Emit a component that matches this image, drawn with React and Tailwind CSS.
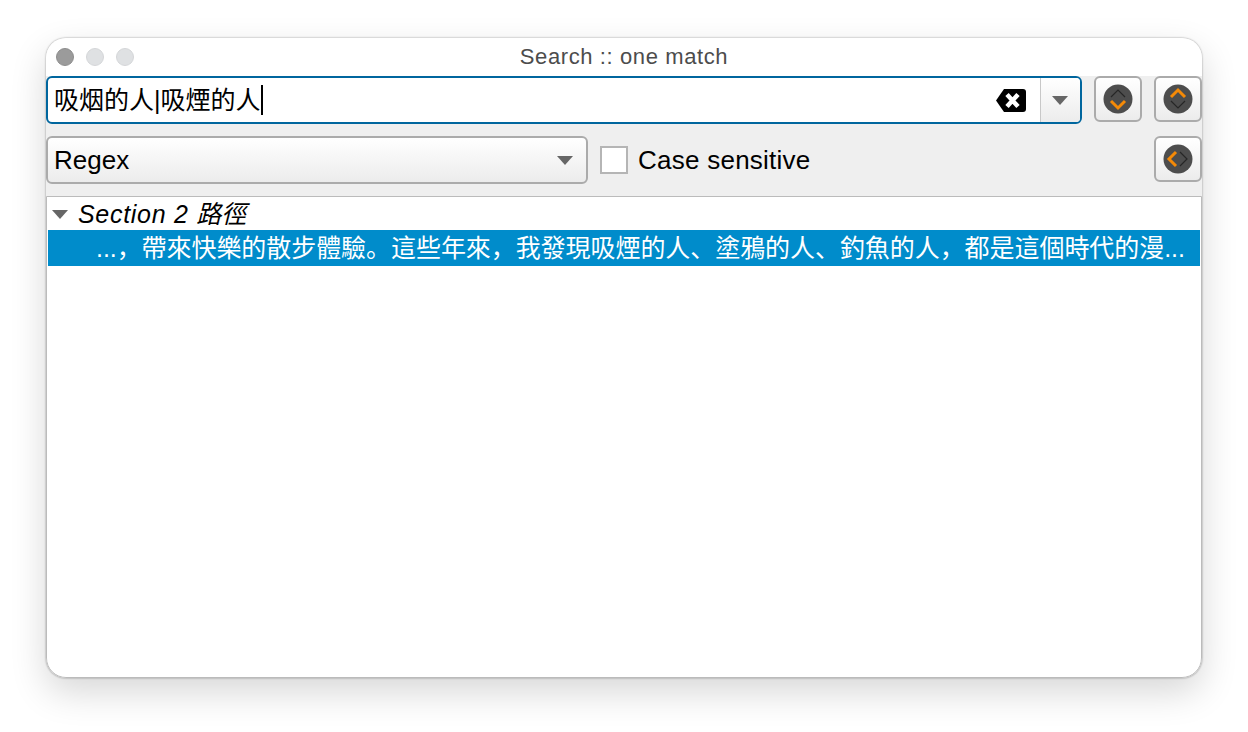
import React from 'react';

const Caret = ({ className = '' }) => (
  <svg width="16" height="9" viewBox="0 0 16 9" className={className}>
    <path d="M0 0h16L8 9z" fill="#666" />
  </svg>
);

// round dark button icon, the "dir" arrow is the orange one
const NavIcon = ({ dir }) => {
  const paths = {
    down: ['M7 12l7-7 7 7', 'M7 16l7 7 7-7'],
    up: ['M7 16l7 7 7-7', 'M7 12l7-7 7 7'],
    left: ['M16 7l7 7-7 7', 'M12 7l-7 7 7 7'],
  };
  const [dim, hot] = paths[dir];
  return (
    <svg width="30" height="30" viewBox="-1 -1 30 30">
      <circle cx="14" cy="14" r="14.500" fill="#4d4d4d" />
      <path d={dim} fill="none" stroke="#262626" strokeWidth="1.200" />
      <path d={hot} fill="none" stroke="#f58a07" strokeWidth="3" />
    </svg>
  );
};

const NavButton = ({ dir }) => (
  <button className="w-[48px] h-[46px] flex items-center justify-center rounded-[6px] border-2 border-[#ababab] bg-gradient-to-b from-white to-[#ececec]">
    <NavIcon dir={dir} />
  </button>
);

const App = () => {
  return (
    <div className="w-[1248px] h-[732px] bg-white pl-[46px] pt-[38px] overflow-hidden font-['Liberation_Sans','Noto_Sans_CJK_SC',sans-serif]">
      <div className="w-[1156px] h-[640px] flex flex-col rounded-[20px] overflow-hidden bg-[#efefef] shadow-[0_0_2px_rgba(0,0,0,0.45),0_14px_36px_rgba(0,0,0,0.16)]">
        {/* title bar */}
        <div className="h-[38px] shrink-0 bg-white flex items-center relative">
          <div className="flex items-center gap-[12px] pl-[10px]">
            <span className="w-[18px] h-[18px] rounded-full bg-[#9b9b9b] border border-[#8d8d8d]" />
            <span className="w-[18px] h-[18px] rounded-full bg-[#dfe1e3] border border-[#d4d6d8]" />
            <span className="w-[18px] h-[18px] rounded-full bg-[#dfe1e3] border border-[#d4d6d8]" />
          </div>
          <span className="absolute inset-x-0 top-[2px] text-center text-[22px] tracking-[0.6px] text-[#4c4c4c]">Search :: one match</span>
        </div>

        {/* search row */}
        <div className="flex items-start shrink-0">
          <div className="w-[1036px] h-[48px] flex rounded-[6px] border-2 border-[#00669e] bg-white overflow-hidden">
            <div className="flex-1 flex items-center pl-[6px] pr-[14px]">
              <span className="text-[25px] leading-none text-black">吸烟的人|吸煙的人</span>
              <span className="w-[2px] h-[30px] bg-black" />
              <svg width="30" height="23" viewBox="0 0 30 23" className="ml-auto">
                <path d="M8 0h19a3 3 0 0 1 3 3v17a3 3 0 0 1-3 3H8L0 11.500z" fill="#000" />
                <path d="M11 5.500l11 12M22 5.500l-11 12" stroke="#fff" strokeWidth="4.500" />
              </svg>
            </div>
            <div className="w-[40px] flex items-center justify-center pr-[2px] border-l border-[#c8c8c8] bg-gradient-to-b from-white to-[#ececec]">
              <Caret />
            </div>
          </div>
          <div className="ml-[12px] flex gap-[12px]">
            <NavButton dir="down" />
            <NavButton dir="up" />
          </div>
        </div>

        {/* options row */}
        <div className="flex items-start shrink-0 mt-[12px]">
          <div className="w-[542px] h-[48px] flex items-center justify-between pl-[6px] pr-[13px] rounded-[6px] border-2 border-[#ababab] bg-gradient-to-b from-white to-[#ececec]">
            <span className="text-[26px] text-black">Regex</span>
            <Caret />
          </div>
          <div className="ml-[12px] h-[48px] flex items-center gap-[10px]">
            <span className="w-[28px] h-[28px] border-2 border-[#b5b5b5] bg-white" />
            <span className="text-[26px] tracking-[0.25px] text-black">Case sensitive</span>
          </div>
          <div className="ml-auto">
            <NavButton dir="left" />
          </div>
        </div>

        {/* results tree */}
        <div className="flex-1 mt-[12px] bg-white border border-[#bbbbbb] rounded-b-[20px] overflow-hidden pt-px px-px">
          <div className="h-[32px] flex items-center pl-[4px]">
            <Caret />
            <span className="ml-[10px] pt-[2px] text-[25px] italic text-black"><span className="tracking-[0.7px]">Section 2 </span>路徑</span>
          </div>
          <div className="h-[36px] flex items-center pl-[48px] bg-[#008ccb] text-white text-[25px] tracking-[-0.06px] leading-none whitespace-nowrap overflow-hidden">
            ...，帶來快樂的散步體驗。這些年來，我發現吸煙的人、塗鴉的人、釣魚的人，都是這個時代的漫...
          </div>
        </div>
      </div>
    </div>
  );
};

export default App;
